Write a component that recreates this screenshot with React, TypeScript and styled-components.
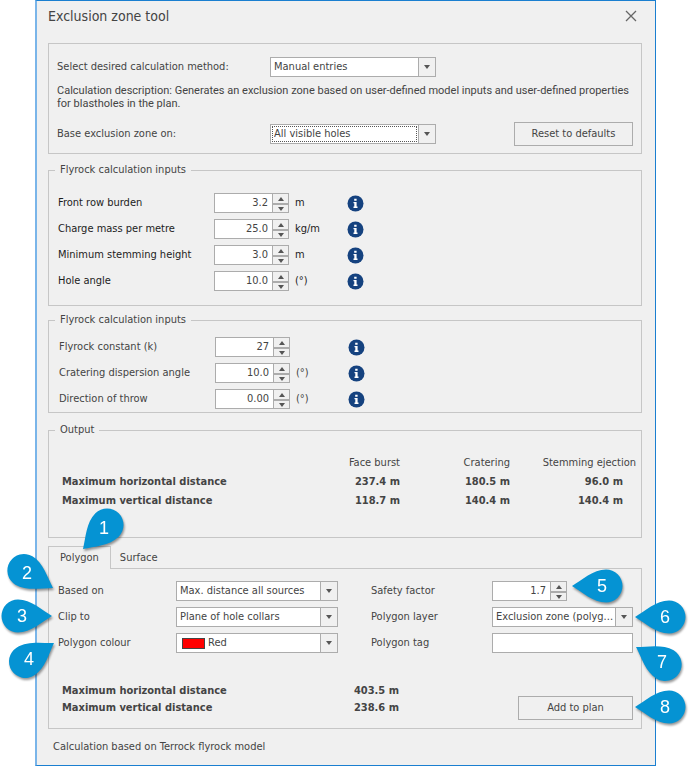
import React from 'react';
import styled, { createGlobalStyle, css } from 'styled-components';

const LINE = '#c6c6c6';
const FIELD_LINE = '#acacac';

const GlobalStyle = createGlobalStyle`
  *, *::before, *::after { box-sizing: border-box; }
  body {
    margin: 0;
    background: #fff;
    color: #444;
    font: 11px/16px "DejaVu Sans Condensed", Tahoma, "Noto Sans", sans-serif;
  }
  button, input, select { font: inherit; color: inherit; }
`;

const Page = styled.main`
  padding: 0 33px 0 35px;
  overflow: hidden;
`;

const Dialog = styled.section`
  padding: 0 13px 10px 11px;
  background: #f0f0f0;
  border: 1px solid #1a7fd0;
  border-left: 2px solid #7ab5e9;
`;

const TitleBar = styled.header`
  display: flex;
  justify-content: space-between;
  align-items: center;
  padding: 5px 5px 17px 0;
`;

const Title = styled.h1`
  margin: 0;
  font-size: 14px;
  line-height: 20px;
  font-weight: 400;
`;

const CloseButton = styled.button`
  display: flex;
  padding: 0;
  border: 0;
  background: none;
`;

const Panel = styled.div`
  padding: 13px 8px 7px;
  border: 1px solid ${LINE};
  margin-bottom: 8px;
`;

const MethodRow = styled.div`
  display: flex;
  align-items: center;
`;

const MethodLabel = styled.label`
  width: 213px;
`;

const Description = styled.p`
  margin: 7px -6px 12px 0;
  font-family: Roboto, sans-serif;
  line-height: 13px;
`;

const Group = styled.fieldset<{ $pad: string; $gap: number }>`
  min-width: 0;
  margin: 0 0 ${p => p.$gap}px;
  padding: ${p => p.$pad};
  border: 1px solid ${LINE};
`;

const Legend = styled.legend<{ $shift: number }>`
  padding: 0 5px;
  margin-left: ${p => p.$shift}px;
`;

const InputRow = styled.div<{ $dark?: boolean }>`
  display: grid;
  grid-template-columns: 156px 75px 58px 18px;
  align-items: center;
  height: 26px;
  label, span { color: ${p => (p.$dark ? '#1c1c1c' : '#444')}; }
`;

const Unit = styled.span`
  padding-left: 6px;
`;

const InfoButton = styled.button`
  display: flex;
  padding: 0;
  border: 0;
  background: none;
`;

const SpinBox = styled.div`
  display: grid;
  grid-template-columns: 1fr 16px;
  width: 75px;
  height: 20px;
  background: #fff;
  border: 1px solid ${FIELD_LINE};
`;

const SpinInput = styled.input`
  min-width: 0;
  padding: 0 4px 0 0;
  border: 0;
  outline: 0;
  background: none;
  text-align: right;
  appearance: textfield;
  &::-webkit-inner-spin-button, &::-webkit-outer-spin-button { appearance: none; margin: 0; }
`;

const SpinButtons = styled.div`
  display: grid;
  grid-template-rows: 1fr 1fr;
  background: #f0f0f0;
  border-left: 1px solid ${FIELD_LINE};
`;

const SpinButton = styled.button`
  display: flex;
  align-items: center;
  justify-content: center;
  min-height: 0;
  padding: 0;
  border: 0;
  background: none;
  & + & { border-top: 2px solid ${FIELD_LINE}; }
`;

const SelectBox = styled.div<{ $width?: number; $focused?: boolean }>`
  position: relative;
  width: ${p => (p.$width ? `${p.$width}px` : '100%')};
  height: 20px;
  background: #fff;
  border: 1px solid ${FIELD_LINE};
  ${p => p.$focused && css`
    &::after {
      content: '';
      position: absolute;
      inset: 1px 18px 1px 1px;
      border: 1px dotted #555;
      pointer-events: none;
    }
  `}
`;

const Select = styled.select<{ $indent?: number }>`
  display: block;
  width: 100%;
  height: 18px;
  padding: 0 18px 0 ${p => p.$indent ?? 3}px;
  border: 0;
  border-radius: 0;
  outline: 0;
  background: none;
  appearance: none;
`;

const Arrow = styled.span`
  position: absolute;
  inset: 0 0 0 auto;
  display: flex;
  align-items: center;
  justify-content: center;
  width: 17px;
  background: #f0f0f0;
  border-left: 1px solid ${FIELD_LINE};
  pointer-events: none;
`;

const Swatch = styled.span`
  position: absolute;
  left: 5px;
  top: 4px;
  width: 23px;
  height: 11px;
  background: #f00;
  border: 1px solid #444;
`;

const TextInput = styled.input`
  display: block;
  width: 100%;
  height: 20px;
  padding: 0 4px;
  background: #fff;
  border: 1px solid ${FIELD_LINE};
  border-radius: 0;
`;

const PushButton = styled.button<{ $width: number }>`
  width: ${p => p.$width}px;
  height: 24px;
  padding: 0;
  background: #f0f0f0;
  border: 1px solid ${FIELD_LINE};
`;

const ButtonSlot = styled.div`
  position: relative;
  margin-left: auto;
  display: flex;
`;

const OutputTable = styled.table`
  width: 100%;
  table-layout: fixed;
  border-collapse: collapse;
  th, td { height: 19px; padding: 0; text-align: right; font-weight: 700; white-space: nowrap; }
  thead th { font-weight: 400; }
  tbody th { text-align: left; }
  td:last-child { padding-right: 13px; }
`;

const Col = styled.col<{ $width: number }>`
  width: ${p => p.$width}px;
`;

const TabList = styled.div`
  display: flex;
  margin-bottom: -1px;
`;

const Tab = styled.button<{ $active?: boolean }>`
  position: relative;
  height: 23px;
  padding: 0 ${p => (p.$active ? 11 : 8)}px;
  border: 1px solid ${p => (p.$active ? LINE : 'transparent')};
  border-bottom: 0;
  background: ${p => (p.$active ? '#f0f0f0' : 'transparent')};
`;

const TabPanel = styled.div`
  padding: 9px 8px 8px 9px;
  border: 1px solid ${LINE};
`;

const FieldLabel = styled.label`
  position: relative;
`;

const Columns = styled.div`
  display: grid;
  grid-template-columns: 280px minmax(0, 1fr);
  column-gap: 33px;
`;

const FieldGrid = styled.div<{ $label: number }>`
  display: grid;
  grid-template-columns: ${p => p.$label}px minmax(0, 1fr);
  grid-auto-rows: 26px;
  align-items: center;
`;

const Cell = styled.div<{ $fit?: boolean }>`
  position: relative;
  width: ${p => (p.$fit ? 'fit-content' : 'auto')};
`;

const Totals = styled.div`
  display: flex;
  align-items: flex-end;
  height: 38px;
  margin-top: 26px;
`;

const TotalsTable = styled.table`
  align-self: flex-start;
  width: 337px;
  margin-left: 4px;
  border-collapse: collapse;
  th, td { height: 17px; padding: 0; font-weight: 700; line-height: 17px; }
  th { text-align: left; }
  td { text-align: right; }
`;

const Footer = styled.footer`
  padding: 10px 0 0 5px;
`;

const PinSvg = styled.svg<{ $side: 'left' | 'right'; $offset: number; $top: number }>`
  position: absolute;
  z-index: 2;
  ${p => p.$side}: ${p => p.$offset - 53}px;
  top: ${p => p.$top - 53}px;
  pointer-events: none;
  filter: drop-shadow(1px 2px 1px rgba(0, 0, 0, 0.4));
  text { font: 18px "Liberation Sans", Arial, sans-serif; fill: #fff; text-anchor: middle; }
`;

interface PinProps { n: number; angle: number; side?: 'left' | 'right'; offset: number; top: number; }

/* Teardrop marker whose tip sits at the centre of its square canvas. */
function Pin({ n, angle, side = 'left', offset, top }: PinProps) {
  const rad = (angle * Math.PI) / 180;
  return (
    <PinSvg $side={side} $offset={offset} $top={top} width="106" height="106" viewBox="-53 -53 106 106" aria-hidden="true">
      <path
        transform={`rotate(${angle})`}
        fill="#0593d3"
        d="M0 0C10-6 21-16.500 34-16.500A16.500 16.500 0 0 1 34 16.500C21 16.500 10 6 0 0Z"
      />
      <text x={Math.round(30 * Math.cos(rad))} y={Math.round(30 * Math.sin(rad)) + 6}>{n}</text>
    </PinSvg>
  );
}

function Spin({ id, value }: { id: string; value: string }) {
  return (
    <SpinBox>
      <SpinInput id={id} type="number" step="any" defaultValue={value} />
      <SpinButtons>
        <SpinButton type="button" aria-label="Increase">
          <svg width="8" height="4" viewBox="0 0 8 4"><path d="M1 4L4 0L7 4Z" fill="#555" /></svg>
        </SpinButton>
        <SpinButton type="button" aria-label="Decrease">
          <svg width="8" height="4" viewBox="0 0 8 4"><path d="M1 0L4 4L7 0Z" fill="#555" /></svg>
        </SpinButton>
      </SpinButtons>
    </SpinBox>
  );
}

interface DropProps { id: string; value: string; width?: number; focused?: boolean; swatch?: boolean; }

function Drop({ id, value, width, focused, swatch }: DropProps) {
  return (
    <SelectBox $width={width} $focused={focused}>
      {swatch && <Swatch />}
      <Select id={id} $indent={swatch ? 31 : 3}><option>{value}</option></Select>
      <Arrow>
        <svg width="8" height="4" viewBox="0 0 8 4"><path d="M1 0H7L4 4Z" fill="#555" /></svg>
      </Arrow>
    </SelectBox>
  );
}

function Info() {
  return (
    <InfoButton type="button" aria-label="Information">
      <svg width="17" height="17" viewBox="0 0 17 17">
        <circle cx="8.500" cy="8.500" r="8" fill="#15427f" />
        <path d="M7.200 3.800H9.600V5.800H7.200ZM6.500 7H9.600V11.600H10.500V12.900H6.500V11.600H7.300V8.300H6.500Z" fill="#fff" />
      </svg>
    </InfoButton>
  );
}

const blastInputs = [
  { id: 'burden', label: 'Front row burden', value: '3.2', unit: 'm' },
  { id: 'charge', label: 'Charge mass per metre', value: '25.0', unit: 'kg/m' },
  { id: 'stemming', label: 'Minimum stemming height', value: '3.0', unit: 'm' },
  { id: 'hole-angle', label: 'Hole angle', value: '10.0', unit: '(°)' },
];

const flyrockInputs = [
  { id: 'constant', label: 'Flyrock constant (k)', value: '27', unit: '' },
  { id: 'dispersion', label: 'Cratering dispersion angle', value: '10.0', unit: '(°)' },
  { id: 'direction', label: 'Direction of throw', value: '0.00', unit: '(°)' },
];

function Rows({ items, dark }: { items: typeof blastInputs; dark?: boolean }) {
  return (
    <>
      {items.map(i => (
        <InputRow key={i.id} $dark={dark}>
          <label htmlFor={i.id}>{i.label}</label>
          <Spin id={i.id} value={i.value} />
          <Unit>{i.unit}</Unit>
          <Info />
        </InputRow>
      ))}
    </>
  );
}

export default function App() {
  return (
    <Page>
      <GlobalStyle />
      <Dialog role="dialog" aria-labelledby="dialog-title">
        <TitleBar>
          <Title id="dialog-title">Exclusion zone tool</Title>
          <CloseButton type="button" aria-label="Close">
            <svg width="12" height="12" viewBox="0 0 12 12"><path d="M1 1L11 11M11 1L1 11" stroke="#666" strokeWidth="1.300" /></svg>
          </CloseButton>
        </TitleBar>

        <Panel>
          <MethodRow>
            <MethodLabel htmlFor="method">Select desired calculation method:</MethodLabel>
            <Drop id="method" value="Manual entries" width={166} />
          </MethodRow>
          <Description>
            Calculation description: Generates an exclusion zone based on user-defined model inputs and user-defined properties for blastholes in the plan.
          </Description>
          <MethodRow>
            <MethodLabel htmlFor="base">Base exclusion zone on:</MethodLabel>
            <Drop id="base" value="All visible holes" width={166} focused />
            <ButtonSlot><PushButton type="button" $width={119}>Reset to defaults</PushButton></ButtonSlot>
          </MethodRow>
        </Panel>

        <Group $pad="12px 9px 11px" $gap={6}>
          <Legend $shift={-3}>Flyrock calculation inputs</Legend>
          <Rows items={blastInputs} dark />
        </Group>

        <Group $pad="6px 10px 0" $gap={9}>
          <Legend $shift={-4}>Flyrock calculation inputs</Legend>
          <Rows items={flyrockInputs} />
        </Group>

        <Group $pad="15px 5px 27px 13px" $gap={8}>
          <Legend $shift={-7}>Output</Legend>
          <OutputTable>
            <colgroup><col /><Col $width={104} /><Col $width={110} /><Col $width={126} /></colgroup>
            <thead>
              <tr><th aria-label="Measure" /><th>Face burst</th><th>Cratering</th><th>Stemming ejection</th></tr>
            </thead>
            <tbody>
              <tr><th>Maximum horizontal distance</th><td>237.4 m</td><td>180.5 m</td><td>96.0 m</td></tr>
              <tr><th>Maximum vertical distance</th><td>118.7 m</td><td>140.4 m</td><td>140.4 m</td></tr>
            </tbody>
          </OutputTable>
        </Group>

        <TabList role="tablist">
          <Tab type="button" role="tab" aria-selected="true" $active>
            Polygon
            <Pin n={1} angle={-45} offset={34} top={2} />
          </Tab>
          <Tab type="button" role="tab" aria-selected="false">Surface</Tab>
        </TabList>
        <TabPanel role="tabpanel">
          <Columns>
            <FieldGrid $label={118}>
              <FieldLabel htmlFor="based">Based on<Pin n={2} angle={211} offset={-5} top={5} /></FieldLabel>
              <Drop id="based" value="Max. distance all sources" />
              <FieldLabel htmlFor="clip">Clip to<Pin n={3} angle={180} offset={-6} top={7} /></FieldLabel>
              <Drop id="clip" value="Plane of hole collars" />
              <FieldLabel htmlFor="colour">Polygon colour<Pin n={4} angle={147} offset={-4} top={8} /></FieldLabel>
              <Drop id="colour" value="Red" swatch />
            </FieldGrid>
            <FieldGrid $label={121}>
              <FieldLabel htmlFor="safety">Safety factor</FieldLabel>
              <Cell $fit><Spin id="safety" value="1.7" /><Pin n={5} angle={0} side="right" offset={-5} top={5} /></Cell>
              <FieldLabel htmlFor="layer">Polygon layer</FieldLabel>
              <Cell><Drop id="layer" value="Exclusion zone (polyg..." /><Pin n={6} angle={0} side="right" offset={-2} top={10} /></Cell>
              <FieldLabel htmlFor="tag">Polygon tag</FieldLabel>
              <Cell><TextInput id="tag" type="text" /><Pin n={7} angle={31} side="right" offset={-3} top={14} /></Cell>
            </FieldGrid>
          </Columns>
          <Totals>
            <TotalsTable>
              <tbody>
                <tr><th>Maximum horizontal distance</th><td>403.5 m</td></tr>
                <tr><th>Maximum vertical distance</th><td>238.6 m</td></tr>
              </tbody>
            </TotalsTable>
            <ButtonSlot>
              <PushButton type="button" $width={115}>Add to plan</PushButton>
              <Pin n={8} angle={0} side="right" offset={-2} top={11} />
            </ButtonSlot>
          </Totals>
        </TabPanel>
        <Footer>Calculation based on Terrock flyrock model</Footer>
      </Dialog>
    </Page>
  );
}
